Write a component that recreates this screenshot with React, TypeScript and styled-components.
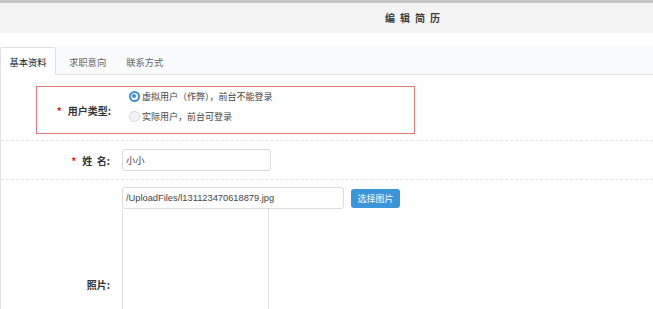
import React from 'react';
import styled, { createGlobalStyle } from 'styled-components';

const GlobalStyle = createGlobalStyle`
  html, body {
    margin: 0;
    padding: 0;
    background: #fff;
    font-family: "Noto Sans CJK SC", "Liberation Sans", sans-serif;
    font-size: 9px;
    color: #333;
  }
`;

const tabs = ['基本资料', '求职意向', '联系方式'];

const App: React.FC = () => {
  return (
    <>
      <GlobalStyle />
      <Header>
        <Title>编辑简历</Title>
      </Header>
      <Spacer />
      <TabBar>
        {tabs.map((t, i) => (
          <Tab key={t} active={i === 0}>
            {t}
          </Tab>
        ))}
      </TabBar>
      <Form>
        <TypeRow>
          <HighlightBox>
            <BoxLabel>
              <Required>*</Required>
              用户类型:
            </BoxLabel>
            <RadioGroup>
              <RadioItem>
                <Radio checked />
                虚拟用户（作弊），前台不能登录
              </RadioItem>
              <RadioItem>
                <Radio />
                实际用户，前台可登录
              </RadioItem>
            </RadioGroup>
          </HighlightBox>
        </TypeRow>
        <Row>
          <Label>
            <Required>*</Required>
            姓&nbsp;&nbsp;名:
          </Label>
          <Field>
            <TextInput width={149} defaultValue="小小" />
          </Field>
        </Row>
        <PhotoRow>
          <Label>照片:</Label>
          <Field>
            <UploadLine>
              <TextInput width={222} defaultValue="/UploadFiles/l131123470618879.jpg" />
              <PickButton>选择图片</PickButton>
            </UploadLine>
            <Preview />
          </Field>
        </PhotoRow>
      </Form>
    </>
  );
};

const Header = styled.div`
  height: 30px;
  border-top: 3px solid #c4c4c4;
  background: #f3f3f3;
  display: flex;
  align-items: center;
  padding-left: 385px;
`;

const Title = styled.div`
  font-size: 10px;
  font-weight: bold;
  color: #3a3a3a;
  letter-spacing: 5px;
  line-height: 1;
`;

const Spacer = styled.div`
  height: 14px;
`;

const TabBar = styled.div`
  display: flex;
  height: 27px;
  background: #fafbfc;
  border-bottom: 1px solid #e4e4e4;
`;

const Tab = styled.div<{ active?: boolean }>`
  width: ${p => (p.active ? '56px' : 'auto')};
  box-sizing: border-box;
  padding: 0 ${p => (p.active ? '0' : '6px')};
  margin-left: ${p => (p.active ? '0' : '6px')};
  display: flex;
  align-items: center;
  justify-content: center;
  font-size: 9.3px;
  color: ${p => (p.active ? '#222' : '#666')};
  background: ${p => (p.active ? '#fff' : 'transparent')};
  border: 1px solid ${p => (p.active ? '#e2e2e2' : 'transparent')};
  border-bottom: none;
  border-radius: 3px 3px 0 0;
  margin-bottom: -1px;
`;

const Form = styled.div`
  border-left: 1px solid #e2e2e2;
`;

const TypeRow = styled.div`
  padding: 11px 0 6px 35px;
  border-bottom: 1px dashed #e6e6e6;
`;

const HighlightBox = styled.div`
  width: 379px;
  height: 48px;
  box-sizing: border-box;
  border: 1px solid #e27a7a;
  display: flex;
  align-items: center;
`;

const BoxLabel = styled.div`
  width: 74px;
  box-sizing: border-box;
  text-align: right;
  font-size: 10px;
  font-weight: bold;
  color: #333;
`;

const Required = styled.span`
  color: #e02020;
  font-weight: bold;
  margin-right: 6px;
`;

const RadioGroup = styled.div`
  display: flex;
  flex-direction: column;
  gap: 7px;
  margin-left: 18px;
  margin-top: -7px;
`;

const RadioItem = styled.label`
  display: flex;
  align-items: center;
  gap: 1px;
  color: #444;
  line-height: 13px;
`;

const Radio = styled.span<{ checked?: boolean }>`
  width: 11px;
  height: 11px;
  box-sizing: border-box;
  border-radius: 50%;
  border: ${p => (p.checked ? '2.5px solid #3b8fd8' : '1px solid #d6d6d6')};
  background: ${p => (p.checked ? '#fff' : '#f3f3f3')};
  position: relative;
  margin-right: 1px;

  &::after {
    content: '';
    display: ${p => (p.checked ? 'block' : 'none')};
    position: absolute;
    left: 1px;
    top: 1px;
    width: 4px;
    height: 4px;
    border-radius: 50%;
    background: #3b8fd8;
  }
`;

const Row = styled.div`
  display: flex;
  align-items: center;
  height: 38px;
  border-bottom: 1px dashed #e6e6e6;
`;

const PhotoRow = styled.div`
  display: flex;
  align-items: center;
  padding-top: 7px;
`;

const Label = styled.div`
  width: 109px;
  text-align: right;
  font-size: 10px;
  font-weight: bold;
  color: #333;
  flex-shrink: 0;
`;

const Field = styled.div`
  margin-left: 12px;
  display: flex;
  flex-direction: column;
`;

const TextInput = styled.input<{ width: number }>`
  width: ${p => p.width}px;
  height: 22px;
  box-sizing: border-box;
  border: 1px solid #dcdcdc;
  border-radius: 3px;
  padding: 0 3px;
  font-family: "Liberation Sans", "Noto Sans CJK SC", sans-serif;
  font-size: 9.3px;
  color: #444;
  outline: none;
`;

const UploadLine = styled.div`
  display: flex;
  align-items: center;
  gap: 7px;
`;

const PickButton = styled.button`
  height: 19px;
  width: 49px;
  padding: 0;
  border: none;
  border-radius: 3px;
  background: #3b95d9;
  color: #fff;
  font-family: "Noto Sans CJK SC", sans-serif;
  font-size: 9px;
`;

const Preview = styled.div`
  width: 147px;
  height: 172px;
  box-sizing: border-box;
  border: 1px solid #dedede;
  border-top: none;
`;

export default App;
